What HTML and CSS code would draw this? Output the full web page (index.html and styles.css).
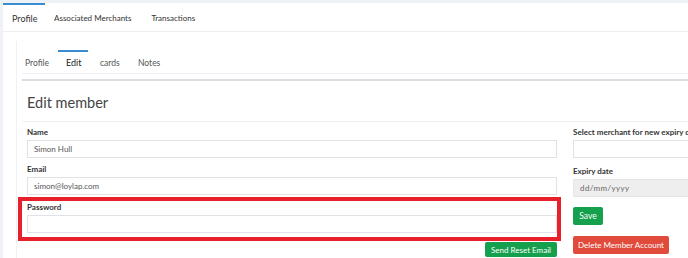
FILE: index.html
```html
<!DOCTYPE html>
<html>
<head>
<meta charset="utf-8">
<link rel="stylesheet" href="styles.css">
</head>
<body>
<div class="main">
  <nav class="topnav">
    <a class="tab active">Profile</a>
    <a class="tab">Associated Merchants</a>
    <a class="tab">Transactions</a>
  </nav>
  <div class="card">
    <nav class="subnav">
      <a class="subtab">Profile</a>
      <a class="subtab active">Edit</a>
      <a class="subtab">cards</a>
      <a class="subtab">Notes</a>
    </nav>
    <div class="rule"></div>
    <h1 class="title">Edit member</h1>
    <div class="form">
      <div class="col">
        <div class="group">
          <label class="lbl">Name</label>
          <div class="input">Simon Hull</div>
        </div>
        <div class="group">
          <label class="lbl">Email</label>
          <div class="input">simon@loylap.com</div>
        </div>
        <div class="group highlight">
          <label class="lbl">Password</label>
          <div class="input"></div>
        </div>
        <div class="btnrow"><button class="btn green small">Send Reset Email</button></div>
        <label class="lbl muted">Parent Link</label>
      </div>
      <div class="col">
        <div class="group">
          <label class="lbl">Select merchant for new expiry date</label>
          <div class="input"></div>
        </div>
        <div class="group expiry">
          <label class="lbl">Expiry date</label>
          <div class="input disabled">dd/mm/yyyy</div>
        </div>
        <div><button class="btn green save">Save</button></div>
        <div><button class="btn red">Delete Member Account</button></div>
      </div>
    </div>
  </div>
</div>
</body>
</html>
```
FILE: styles.css
```css
* { box-sizing: border-box; }
html, body { margin: 0; padding: 0; }
body {
  background: #eef1f6;
  padding: 3px 0 0 3px;
  font-family: Lato, "Liberation Sans", sans-serif;
  color: #333;
  overflow: hidden;
  height: 258px;
  width: 688px;
}
.main {
  background: #fff;
  height: 255px;
  width: 900px;
}
.topnav {
  display: flex;
  height: 29px;
  border-bottom: 1px solid #eeeff2;
}
.tab {
  font-size: 8px;
  padding: 0 9px;
  display: flex;
  align-items: center;
  border-top: 2px solid transparent;
  color: #333;
  white-space: nowrap;
}
.tab:first-child { width: 42px; }
.tab:nth-child(2) { padding-right: 11px; }
.tab.active { border-top-color: #3a8dd0; font-size: 9px; }
.card {
  margin: 9px 0 0 13px;
  border-left: 1px solid #f0f1f4;
  padding-left: 5px;
  padding-top: 9px;
}
.subnav {
  display: flex;
  height: 24px;
  border-bottom: 1px solid #f0f1f4;
}
.subtab {
  font-size: 8.5px;
  color: #555;
  display: flex;
  align-items: center;
  border-top: 2px solid transparent;
  white-space: nowrap;
}
.subtab:nth-child(1) { width: 36px; padding-left: 3px; }
.subtab:nth-child(2) { width: 30px; padding-left: 8px; }
.subtab:nth-child(3) { width: 38px; padding-left: 12px; }
.subtab:nth-child(4) { width: 40px; padding-left: 12px; }
.subtab.active { border-top-color: #3a8dd0; color: #222; font-size: 9px; }
.rule {
  height: 2px;
  background: #dcdde3;
  margin-top: 5px;
}
.title {
  font-size: 14.5px;
  font-weight: 400;
  color: #444;
  margin: 0;
  padding: 13px 0 0 5px;
  height: 41px;
  border-bottom: 1px solid #f0f1f4;
}
.form {
  display: grid;
  grid-template-columns: 530px 530px;
  column-gap: 16px;
  padding-left: 5px;
  padding-top: 5px;
}
.col { display: flex; flex-direction: column; }
.group { margin-bottom: 6px; }
.lbl {
  display: block;
  font-size: 8px;
  font-weight: 700;
  color: #333;
  line-height: 10px;
  margin-bottom: 3px;
  white-space: nowrap;
}
.lbl.muted { color: #888; font-weight: 400; margin-top: 2px; }
.input {
  height: 18px;
  border: 1px solid #e1e2e8;
  font-size: 8px;
  color: #555;
  padding: 0 6px;
  display: flex;
  align-items: center;
}
.input.disabled { background: #eeeeee; border-color: #e6e6e6; color: #666; letter-spacing: 0.4px; }
.expiry { margin-top: 2px; }
.highlight {
  position: relative;
  margin-top: 1px;
  margin-bottom: 9px;
}
.highlight::after {
  content: "";
  position: absolute;
  left: -9px;
  top: -5px;
  right: -4px;
  bottom: -8px;
  border: 4px solid #e8202c;
}
.btnrow { display: flex; justify-content: flex-end; }
.btn {
  border: 0;
  border-radius: 2px;
  color: #fff;
  font-family: Lato, "Liberation Sans", sans-serif;
  font-size: 8px;
  height: 18px;
  padding: 0;
  white-space: nowrap;
  cursor: pointer;
}
.btn.small { height: 15px; width: 72px; }
.btn.save { width: 30px; font-size: 8.5px; }
.green { background: #14a04c; }
.red { background: #e04b3b; margin-top: 11px; width: 96px; }
```
